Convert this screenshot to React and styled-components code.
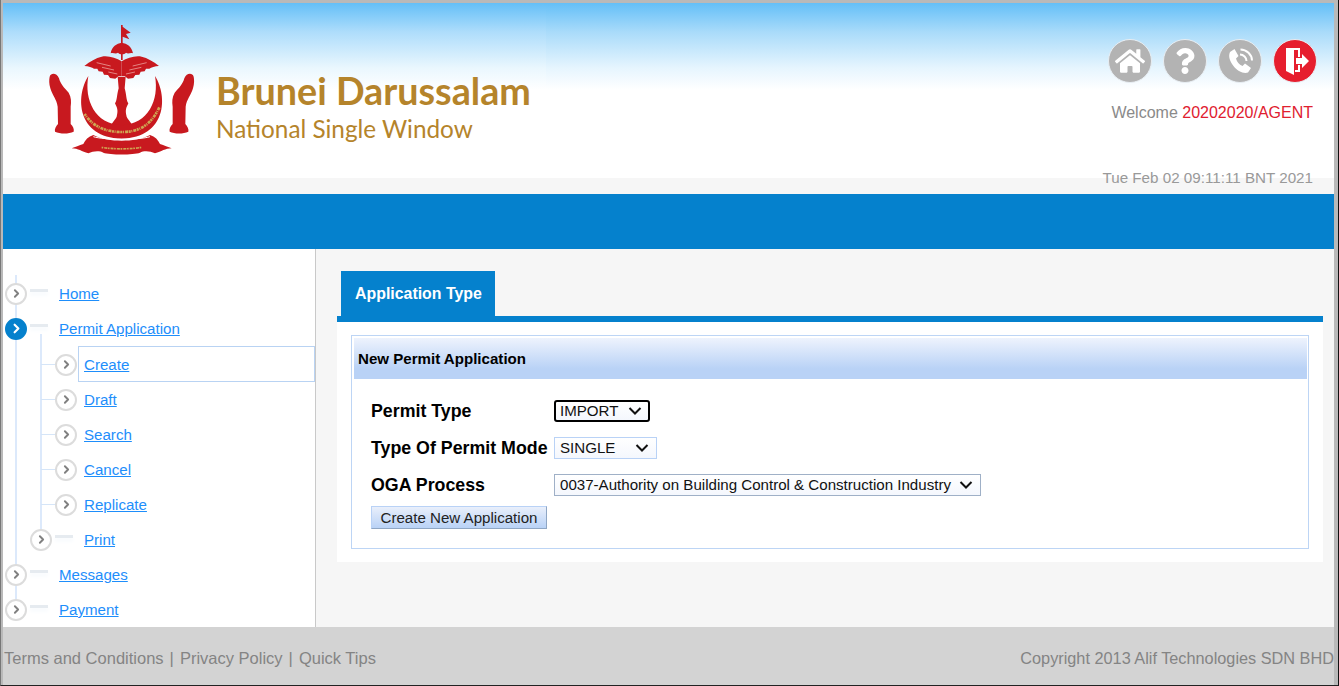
import React from 'react'
import styled, { createGlobalStyle } from 'styled-components'
import { FaHome, FaQuestion } from 'react-icons/fa'
import { ChevronRight } from 'lucide-react'

const GlobalStyle = createGlobalStyle`
  html, body {
    margin: 0;
    padding: 0;
    height: 100%;
    overflow: hidden;
    background: #fff;
  }
  body {
    font-family: "Liberation Sans", Arial, sans-serif;
  }
`

const menu = [
  { label: 'Home', level: 0, stub: true },
  { label: 'Permit Application', level: 0, stub: true, active: true },
  { label: 'Create', level: 1, selected: true },
  { label: 'Draft', level: 1 },
  { label: 'Search', level: 1 },
  { label: 'Cancel', level: 1 },
  { label: 'Replicate', level: 1 },
  { label: 'Print', level: 2, stub: true },
  { label: 'Messages', level: 0, stub: true },
  { label: 'Payment', level: 0, stub: true },
]

const HALF_EMBLEM = (
  <>
    <path d="M245 124 C228 114 205 106 185 110 C168 114 150 124 133 138 C146 139 156 142 162 146 L172 146 L176 154 L188 155 L192 164 L204 165 L210 174 L226 176 L236 168 L245 168 Z" />
    <path d="M29 170 C33 158 50 158 57 175 C62 193 72 203 86 218 C94 232 94 245 92 260 L92 312 C99 318 103 328 101 335 C86 342 60 342 45 335 C43 328 48 318 54 312 L53 260 C50 238 37 226 31 205 C27 190 27 180 29 170 Z" />
  </>
)

const FEATHERS = (
  <path d="M170 128 L212 138 M186 142 L222 150 M205 156 L232 162" fill="none" stroke="#f3b9b4" strokeWidth="2" />
)

const Emblem = () => (
  <EmblemSvg width="146" height="130" viewBox="27 15 438 390">
    <g fill="#c8191f">
      <path d="M243 15 L248 15 L248 20 L272 38 L258 42 L268 58 L248 50 L248 120 L243 120 Z" />
      <path d="M212 100 C215 80 230 70 245 68 C262 70 275 80 279 100 C270 96 266 104 258 98 C252 104 240 104 234 98 C226 104 220 96 212 100 Z" />
      {HALF_EMBLEM}
      <g transform="translate(490 0) scale(-1 1)">{HALF_EMBLEM}</g>
      <path d="M233 170 L257 170 L254 205 C260 225 258 240 265 250 C260 262 254 268 260 290 C264 300 277 310 282 325 L245 345 L208 325 C213 310 226 300 230 290 C236 268 230 262 225 250 C232 240 230 225 236 205 Z" />
      <path d="M145 168 C106 230 110 352 245 356 C380 352 384 230 345 168 C358 240 325 312 245 316 C165 312 132 240 145 168 Z" />
      <path d="M160 345 C185 358 215 362 245 362 C275 362 305 358 330 345 C345 350 355 360 360 372 C372 375 385 382 395 385 C375 385 365 395 345 400 C330 392 310 392 300 398 C280 405 210 405 190 398 C180 392 160 392 145 400 C125 395 115 385 95 385 C105 382 118 375 130 372 C135 360 145 350 160 345 Z" />
    </g>
    {FEATHERS}
    <g transform="translate(490 0) scale(-1 1)">{FEATHERS}</g>
    <path d="M160 350 C190 360 300 360 330 350" fill="none" stroke="#fff" strokeWidth="3" />
    <path d="M134 282 C160 322 200 336 245 336 C290 336 330 322 358 262" fill="none" stroke="#cfa653" strokeWidth="8" strokeDasharray="6 2 3 3 9 2" />
    <path d="M185 382 C215 388 275 388 305 382" fill="none" stroke="#cfa653" strokeWidth="5" strokeDasharray="5 3 9 2" />
  </EmblemSvg>
)

const PhoneIcon = () => (
  <svg width="32" height="32" viewBox="0 0 32 32" fill="#fff">
    <path d="M6 7 L10.5 4 L14.5 11 L12 13.5 C13 17 15 19.5 18.5 21 L21 18.5 L27 23 L24 27.5 C19.5 29 13 26 9.5 21 C6 16.5 4 11.5 6 7 Z" />
    <path d="M16 9.5 C19.5 9.5 22.5 12.5 22.5 16" fill="none" stroke="#fff" strokeWidth="2" />
    <path d="M16.5 4.5 C22.5 4.5 28 9.5 28 15.5" fill="none" stroke="#fff" strokeWidth="2" />
  </svg>
)

const ExitIcon = () => (
  <svg width="32" height="32" viewBox="0 0 32 32" fill="#fff">
    <path d="M7 3 L21 3 L21 12 L19 12 L19 5 L15 5 L15 30 L7 26 Z" />
    <path d="M19 20 L21 20 L21 27 L16 27 L16 25 L19 25 Z" />
    <path d="M17 13 L23 13 L23 9 L30 16 L23 23 L23 19 L17 19 Z" />
  </svg>
)

const App = () => {
  return (
    <>
      <GlobalStyle />
      <Frame>
        <Header>
          <Banner>
            <Brand>
              <Emblem />
              <BrandText>
                <BrandName>Brunei Darussalam</BrandName>
                <BrandSub>National Single Window</BrandSub>
              </BrandText>
            </Brand>
            <HeaderRight>
              <IconRow>
                <RoundIcon><FaHome size={30} color="#fff" /></RoundIcon>
                <RoundIcon><FaQuestion size={26} color="#fff" /></RoundIcon>
                <RoundIcon><PhoneIcon /></RoundIcon>
                <RoundIcon $red><ExitIcon /></RoundIcon>
              </IconRow>
              <Welcome>Welcome <span>20202020/AGENT</span></Welcome>
            </HeaderRight>
          </Banner>
          <DateStrip>Tue Feb 02 09:11:11 BNT 2021</DateStrip>
          <NavBar />
        </Header>

        <Body>
          <Sidebar>
            <TreeLine />
            <SubLine />
            {menu.map(item => (
              <MenuRow key={item.label} $level={item.level} $selected={item.selected}>
                {item.level === 1 && <Tick />}
                <Bullet $active={item.active}>
                  <ChevronRight size={item.active ? 15 : 13} strokeWidth={3.5} />
                </Bullet>
                {item.stub && <Stub />}
                <MenuLabel $selected={item.selected} $level={item.level}>
                  <a href="#">{item.label}</a>
                </MenuLabel>
              </MenuRow>
            ))}
          </Sidebar>

          <Main>
            <TabBar>
              <Tab>Application Type</Tab>
            </TabBar>
            <TabPanel>
              <Fieldset>
                <PanelHead>New Permit Application</PanelHead>
                <FormBody>
                  <FormRow>
                    <FieldLabel>Permit Type</FieldLabel>
                    <Select $focus $width={96}>
                      <span>IMPORT</span>
                      <Arrow />
                    </Select>
                  </FormRow>
                  <FormRow>
                    <FieldLabel>Type Of Permit Mode</FieldLabel>
                    <Select $width={103}>
                      <span>SINGLE</span>
                      <Arrow />
                    </Select>
                  </FormRow>
                  <FormRow>
                    <FieldLabel>OGA Process</FieldLabel>
                    <Select $width={427} $dark>
                      <span>0037-Authority on Building Control &amp; Construction Industry</span>
                      <Arrow />
                    </Select>
                  </FormRow>
                  <CreateButton>Create New Application</CreateButton>
                </FormBody>
              </Fieldset>
            </TabPanel>
          </Main>
        </Body>

        <Footer>
          <FooterLinks>
            <span>Terms and Conditions</span>
            <Sep>|</Sep>
            <span>Privacy Policy</span>
            <Sep>|</Sep>
            <span>Quick Tips</span>
          </FooterLinks>
          <span>Copyright 2013 Alif Technologies SDN BHD</span>
        </Footer>
      </Frame>
    </>
  )
}

const Arrow = () => (
  <svg width="14" height="8" viewBox="0 0 14 8">
    <path d="M1.5 1 L7 6.5 L12.5 1" fill="none" stroke="#111" strokeWidth="2" />
  </svg>
)

const Frame = styled.div`
  box-sizing: border-box;
  width: 1339px;
  height: 686px;
  display: flex;
  flex-direction: column;
  padding: 3px 4px 0 2px;
  background: #b9b9b9;
  border-left: 1px solid #777;
  border-right: 1px solid #111;
  border-bottom: 1px solid #222;
`

const Header = styled.header`
  display: flex;
  flex-direction: column;
  background: #fff;
`

const Banner = styled.div`
  height: 175px;
  display: flex;
  justify-content: space-between;
  padding-right: 17px;
  background:
    linear-gradient(to bottom, #64bff7 0, #aeddfb 29px, #eaf7fe 65px, #fff 87px, #fff 100%) 0 0 / 543px 100% no-repeat,
    linear-gradient(to bottom, #64bff7 0, #a9dbfa 29px, #e6f5fe 65px, #fff 87px, #fff 100%);
`

const Brand = styled.div`
  display: flex;
  align-items: flex-start;
  padding: 22px 0 0 46px;
  gap: 21px;
`

const EmblemSvg = styled.svg`
  flex: none;
  filter: blur(0.4px);
`

const BrandText = styled.div`
  display: flex;
  flex-direction: column;
  padding-top: 45px;
  color: #b5842b;
  font-family: Lato, "Open Sans", sans-serif;
`

const BrandName = styled.div`
  font-size: 37.7px;
  line-height: 42px;
  font-weight: 700;
  white-space: nowrap;
`

const BrandSub = styled.div`
  font-size: 24.3px;
  line-height: 34px;
  white-space: nowrap;
`

const HeaderRight = styled.div`
  display: flex;
  flex-direction: column;
  align-items: flex-end;
  padding-top: 36px;
`

const IconRow = styled.div`
  display: flex;
  gap: 11px;
`

const RoundIcon = styled.div`
  box-sizing: border-box;
  width: 44px;
  height: 44px;
  border-radius: 50%;
  display: flex;
  align-items: center;
  justify-content: center;
  background: ${props => (props.$red ? '#e61e2e' : '#b3b3b3')};
  border: 1px solid #e8eef3;
`

const Welcome = styled.div`
  margin: 19px 4px 0 0;
  font-size: 16px;
  line-height: 22px;
  color: #8a8a8a;
  span {
    color: #e0202f;
  }
`

const DateStrip = styled.div`
  height: 16px;
  padding-right: 21px;
  text-align: right;
  background: #f6f6f6;
  color: #999;
  font-size: 15.2px;
  line-height: 0;
`

const NavBar = styled.div`
  height: 55px;
  background: #0581cd;
`

const Body = styled.div`
  flex: 1;
  display: flex;
  min-height: 0;
`

const Sidebar = styled.nav`
  position: relative;
  box-sizing: border-box;
  width: 313px;
  padding-top: 27px;
  background: #fff;
  border-right: 1px solid #c9c9c9;
  overflow: hidden;
`

const TreeLine = styled.div`
  position: absolute;
  left: 12px;
  top: 26px;
  bottom: 14px;
  width: 2px;
  background: #dce9fb;
`

const SubLine = styled.div`
  position: absolute;
  left: 37px;
  top: 85px;
  height: 205px;
  width: 2px;
  background: #dce9fb;
`

const MenuRow = styled.div`
  position: relative;
  height: 35px;
  margin-top: ${props => (props.$selected ? 1 : 0)}px;
  display: flex;
  align-items: center;
  padding-left: ${props => (props.$level === 0 ? 2 : props.$level === 1 ? 52 : 27)}px;
`

const Tick = styled.div`
  position: absolute;
  left: 38px;
  top: 17px;
  width: 15px;
  height: 1px;
  background: #d5e5f8;
`

const Bullet = styled.div`
  position: relative;
  box-sizing: border-box;
  flex: none;
  width: 22px;
  height: 22px;
  border-radius: 50%;
  display: flex;
  align-items: center;
  justify-content: center;
  background: ${props => (props.$active ? '#0581cd' : '#fff')};
  border: 2px solid ${props => (props.$active ? '#0581cd' : '#dcdcdc')};
  color: ${props => (props.$active ? '#fff' : '#808080')};
`

const Stub = styled.div`
  flex: none;
  width: 18px;
  height: 3px;
  margin: -6px 0 0 3px;
  background: #e6ebf0;
  box-shadow: 0 3px 4px #f4f8fc;
`

const MenuLabel = styled.div`
  box-sizing: border-box;
  display: flex;
  align-items: center;
  font-size: 15.1px;
  ${props => {
    if (props.$selected) {
      return `
        flex: 1;
        height: 36px;
        margin: 0 0 1px 1px;
        padding-left: 5px;
        border: 1px solid #b9d3f3;
      `
    }
    return `padding-left: ${props.$level === 1 ? 7 : 11}px;`
  }}
  a {
    color: #1e8efb;
    text-decoration: underline;
  }
`

const Main = styled.main`
  flex: 1;
  padding: 22px 11px 0 21px;
  background: #f6f6f6;
`

const TabBar = styled.div`
  display: flex;
  padding-left: 4px;
  border-bottom: 6px solid #0581cd;
`

const Tab = styled.div`
  height: 45px;
  padding: 0 13px 0 14px;
  display: flex;
  align-items: center;
  background: #0581cd;
  color: #fff;
  font-size: 15.9px;
  font-weight: 700;
`

const TabPanel = styled.div`
  box-sizing: border-box;
  height: 240px;
  padding: 13px 14px;
  background: #fff;
`

const Fieldset = styled.section`
  box-sizing: border-box;
  height: 100%;
  padding: 2px 1px 2px 2px;
  border: 1px solid #bdd5f5;
`

const PanelHead = styled.div`
  height: 41px;
  display: flex;
  align-items: center;
  padding-left: 4px;
  background: linear-gradient(to bottom, #eef3fd, #b9d2f6 75%, #b9d2f6);
  color: #000;
  font-size: 15.1px;
  font-weight: 700;
`

const FormBody = styled.div`
  display: flex;
  flex-direction: column;
  align-items: flex-start;
  padding: 14px 17px;
`

const FormRow = styled.div`
  height: 37px;
  display: flex;
  align-items: center;
`

const FieldLabel = styled.div`
  width: 183px;
  color: #000;
  font-size: 17.8px;
  font-weight: 700;
  white-space: nowrap;
`

const Select = styled.div`
  box-sizing: border-box;
  width: ${props => props.$width}px;
  height: 22px;
  margin-top: -2px;
  display: flex;
  align-items: center;
  justify-content: space-between;
  padding: 0 7px 0 5px;
  background: linear-gradient(to bottom, #fff, #f4f7fd);
  color: #111;
  font-size: 15.1px;
  white-space: nowrap;
  border: 1px solid ${props => (props.$dark ? '#9fb0c7' : '#b9d2f6')};
  ${props => props.$focus && `
    border: 2px solid #000;
    border-radius: 3px;
    padding: 0 6px 0 4px;
  `}
`

const CreateButton = styled.button`
  box-sizing: border-box;
  width: 176px;
  height: 23px;
  margin-top: 2px;
  padding: 0;
  background: linear-gradient(to bottom, #e9effb, #b9d2f6);
  color: #222;
  font-family: "Liberation Sans", Arial, sans-serif;
  font-size: 15.1px;
  border: 1px solid #8fa6c4;
  border-top-color: #b9d2f6;
  border-left-color: #b9d2f6;
`

const Footer = styled.footer`
  height: 58px;
  flex: none;
  display: flex;
  align-items: center;
  justify-content: space-between;
  padding: 5px 0 0 1px;
  box-sizing: border-box;
  background: #d3d3d3;
  color: #848484;
  font-size: 16.3px;
`

const FooterLinks = styled.span`
  display: flex;
  font-size: 16.5px;
`

const Sep = styled.span`
  padding: 0 6px;
`

export default App
